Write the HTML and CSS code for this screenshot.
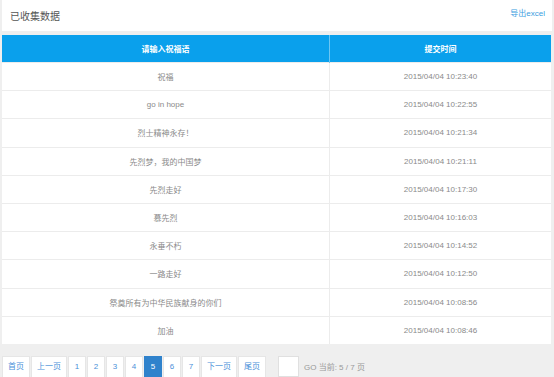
FILE: index.html
```html
<!DOCTYPE html>
<html lang="zh-CN">
<head>
    <meta charset="UTF-8">
    <title>已收集数据</title>
    <link rel="stylesheet" href="styles.css">
</head>
<body>
    <div class="panel-head">
        <h2>已收集数据</h2>
        <a class="export" href="#">导出excel</a>
    </div>

    <table class="data-table">
        <thead>
            <tr>
                <th class="col-wish">请输入祝福语</th>
                <th>提交时间</th>
            </tr>
        </thead>
        <tbody>
            <tr><td>祝福</td><td>2015/04/04 10:23:40</td></tr>
            <tr><td>go in hope</td><td>2015/04/04 10:22:55</td></tr>
            <tr><td>烈士精神永存！</td><td>2015/04/04 10:21:34</td></tr>
            <tr><td>先烈梦，我的中国梦</td><td>2015/04/04 10:21:11</td></tr>
            <tr><td>先烈走好</td><td>2015/04/04 10:17:30</td></tr>
            <tr><td>慕先烈</td><td>2015/04/04 10:16:03</td></tr>
            <tr><td>永垂不朽</td><td>2015/04/04 10:14:52</td></tr>
            <tr><td>一路走好</td><td>2015/04/04 10:12:50</td></tr>
            <tr><td>祭奠所有为中华民族献身的你们</td><td>2015/04/04 10:08:56</td></tr>
            <tr><td>加油</td><td>2015/04/04 10:08:46</td></tr>
        </tbody>
    </table>

    <div class="pager">
        <a class="page wide" href="#">首页</a>
        <a class="page wide" href="#">上一页</a>
        <a class="page" href="#">1</a>
        <a class="page" href="#">2</a>
        <a class="page" href="#">3</a>
        <a class="page" href="#">4</a>
        <a class="page current" href="#">5</a>
        <a class="page" href="#">6</a>
        <a class="page" href="#">7</a>
        <a class="page wide" href="#">下一页</a>
        <a class="page wide" href="#">尾页</a>
        <input class="goto" type="text">
        <span class="pager-info">GO 当前: 5 / 7 页</span>
    </div>
</body>
</html>
```

FILE: styles.css
```css
body {
    margin: 0;
    padding: 0 2px;
    background: #efefef;
    font-family: "Liberation Sans", "Noto Sans CJK SC", sans-serif;
    font-size: 8px;
    color: #8a8a8a;
}

.panel-head {
    height: 31px;
    background: #fff;
    display: flex;
    align-items: center;
    justify-content: space-between;
    padding: 0 7px 0 8px;
}

.panel-head h2 {
    margin: 0;
    font-size: 10px;
    font-weight: normal;
    color: #555;
}

.export {
    color: #3a9de0;
    text-decoration: none;
    margin-top: -6px;
}

.data-table {
    width: 549px;
    margin-top: 4px;
    border-collapse: collapse;
    background: #fff;
}

.data-table th {
    height: 27px;
    background: #0aa0ec;
    color: #fff;
    font-weight: 600;
    padding: 0;
}

.data-table .col-wish {
    width: 327px;
    border-right: 1px solid #6cc6f3;
}

.data-table td {
    height: 27.2px;
    padding: 0;
    text-align: center;
    border-top: 1px solid #ececec;
}

.data-table td:first-child {
    border-right: 1px solid #ececec;
}

.pager {
    margin-top: 12px;
    display: flex;
    align-items: center;
    gap: 1px;
}

.page {
    height: 20px;
    min-width: 16px;
    line-height: 20px;
    text-align: center;
    background: #fff;
    border: 1px solid #e6e6e6;
    color: #4a90d9;
    text-decoration: none;
}

.page.wide {
    padding: 0 5px;
}

.page.current {
    background: #2f82cc;
    border-color: #2f82cc;
    color: #fff;
}

.goto {
    width: 19px;
    height: 19px;
    margin-left: 11px;
    padding: 0;
    border: 1px solid #e0e0e0;
    background: #fff;
}

.pager-info {
    margin-left: 4px;
    color: #999;
}
```
